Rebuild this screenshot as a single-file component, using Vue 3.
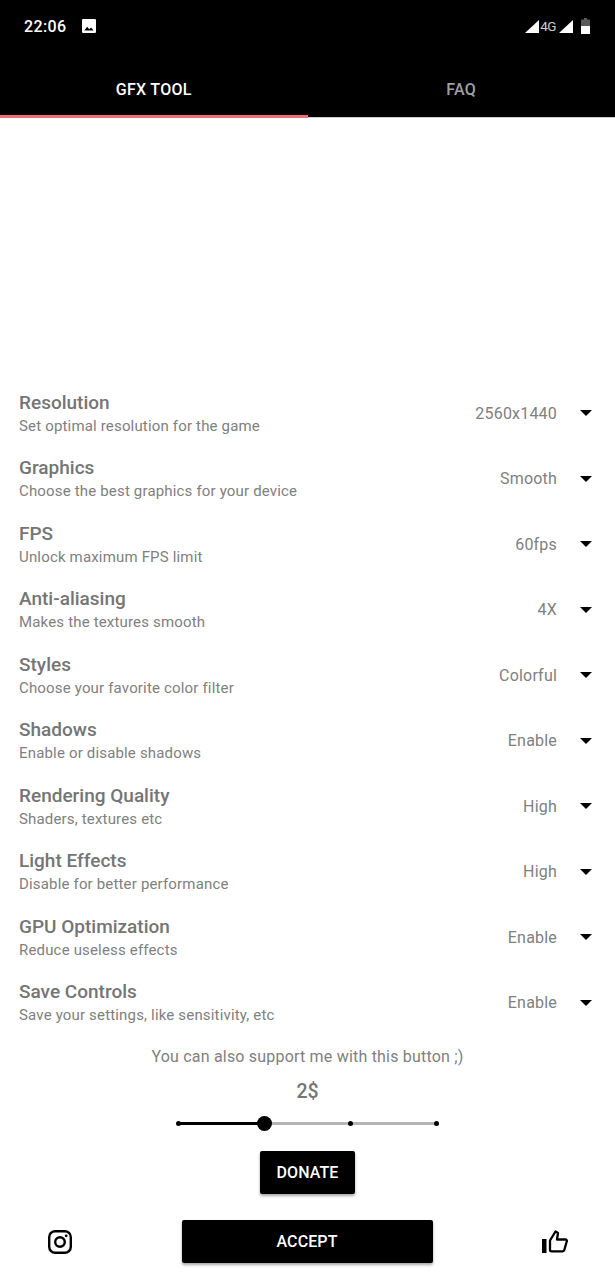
<script setup>
const rows = [
  ['Resolution', 'Set optimal resolution for the game', '2560x1440'],
  ['Graphics', 'Choose the best graphics for your device', 'Smooth'],
  ['FPS', 'Unlock maximum FPS limit', '60fps'],
  ['Anti-aliasing', 'Makes the textures smooth', '4X'],
  ['Styles', 'Choose your favorite color filter', 'Colorful'],
  ['Shadows', 'Enable or disable shadows', 'Enable'],
  ['Rendering Quality', 'Shaders, textures etc', 'High'],
  ['Light Effects', 'Disable for better performance', 'High'],
  ['GPU Optimization', 'Reduce useless effects', 'Enable'],
  ['Save Controls', 'Save your settings, like sensitivity, etc', 'Enable'],
]
</script>

<template>
  <div class="page">
    <header class="head">
      <div class="status">
        <span class="time">22:06</span>
        <svg class="pic" viewBox="0 0 12 12" width="14" height="14"><path fill="#fff" d="M1 0h10a1 1 0 0 1 1 1v10a1 1 0 0 1-1 1H1a1 1 0 0 1-1-1V1a1 1 0 0 1 1-1z"/><path fill="#000" d="M2 9.800l2.400-3.200 1.800 2.200 1.600-1.600 2.200 2.600z"/></svg>
        <span class="grow"></span>
        <svg viewBox="0 0 14 13" width="14" height="13"><path fill="#fff" d="M14 0v13H0z"/></svg>
        <span class="net">4G</span>
        <svg class="sig2" viewBox="0 0 14 13" width="14" height="13"><path fill="#fff" d="M14 0v13H0z"/></svg>
        <svg class="bat" viewBox="0 0 9 16" width="9" height="16"><path fill="#5a5a5a" d="M3 0h3v1.500h3V8H0V1.500h3z"/><path fill="#fff" d="M0 8h9v8H0z"/></svg>
      </div>
      <nav class="tabs">
        <div class="tab on">GFX TOOL</div>
        <div class="tab">FAQ</div>
      </nav>
      <div class="line"><div class="ind"></div><div class="rest"></div></div>
    </header>

    <main class="list">
      <div v-for="r in rows" :key="r[0]" class="row">
        <div class="info">
          <div class="title">{{ r[0] }}</div>
          <div class="sub">{{ r[1] }}</div>
        </div>
        <div class="val">{{ r[2] }}</div>
        <span class="caret"></span>
      </div>
    </main>

    <section class="support">
      <p class="note">You can also support me with this button ;)</p>
      <div class="amount">2$</div>
      <div class="slider">
        <div class="fill"></div>
        <i class="dot d0"></i><i class="dot d2"></i><i class="dot d3"></i>
        <i class="thumb"></i>
      </div>
      <button class="btn donate">DONATE</button>
    </section>

    <footer class="foot">
      <svg viewBox="0 0 24 24" width="24" height="24" fill="none" stroke="#000" stroke-width="2.400">
        <rect x="1.200" y="1.200" width="21.600" height="21.600" rx="6"/>
        <circle cx="12" cy="12" r="4.800"/>
        <circle cx="18.200" cy="5.800" r="1.400" fill="#000" stroke="none"/>
      </svg>
      <button class="btn accept">ACCEPT</button>
      <svg viewBox="0 0 26 23" width="26" height="23">
        <path fill="#000" d="M0 9h4.500v14H0z"/>
        <path fill="none" stroke="#000" stroke-width="2.300" stroke-linejoin="round" d="M8 10.500 13.500 1.500l2.500 1.500-1 6.500h8.500c1 0 1.600.9 1.300 1.800l-2.500 8.700c-.2.700-.8 1.300-1.600 1.300H9.500c-1 0-1.500-.6-1.500-1.500z"/>
      </svg>
    </footer>
  </div>
</template>

<style>
body { margin: 0; background: #fff; }
</style>

<style scoped>
.page {
  width: 615px;
  height: 1280px;
  display: flex;
  flex-direction: column;
  font-family: Roboto, "Liberation Sans", sans-serif;
  background: #fff;
  overflow: hidden;
}
.head { background: #000; height: 118px; display: flex; flex-direction: column; flex: none; }
.status {
  height: 52px;
  display: flex;
  align-items: center;
  padding: 0 25px 0 24px;
  color: #fff;
  flex: none;
}
.time { font-size: 16px; font-weight: 500; letter-spacing: 0.4px; }
.pic { margin-left: 15px; }
.grow { flex: 1; }
.net { font-size: 13.500px; letter-spacing: -0.500px; margin: 0 1px 0 1px; color: #ccc; }
.sig2 { margin-left: 2px; }
.bat { margin-left: 8px; }
.tabs { display: flex; flex: 1; }
.tab {
  flex: 1;
  display: flex;
  align-items: center;
  justify-content: center;
  font-size: 16px;
  font-weight: 500;
  letter-spacing: 0.3px;
  color: #a0a0a0;
  padding-top: 12px;
}
.tab.on { color: #fff; }
.line { height: 3px; display: flex; flex: none; }
.ind { width: 308px; background: #f26d73; }
.rest { flex: 1; height: 1px; align-self: flex-end; background: #ccc; }
.list { margin-top: 262.500px; flex: none; }
.row {
  height: 65.500px;
  box-sizing: border-box;
  display: flex;
  align-items: center;
  padding: 0 23px 0 19px;
}
.info { flex: 1; min-width: 0; padding-top: 2px; margin-top: -1px; }
.title { font-size: 19px; font-weight: 500; color: #757575; line-height: 24px; }
.sub { font-size: 15px; color: #808080; line-height: 22px; letter-spacing: 0.17px; }
.val { font-size: 16px; color: #808080; letter-spacing: 0.2px; }
.caret {
  margin-left: 23px;
  width: 0;
  height: 0;
  border-left: 6px solid transparent;
  border-right: 6px solid transparent;
  border-top: 6px solid #000;
}
.support { display: flex; flex-direction: column; align-items: center; flex: none; margin-top: 8.500px; }
.note { margin: 0; font-size: 16px; line-height: 22px; color: #808080; letter-spacing: 0.2px; padding-top: 2px; }
.amount { font-size: 19.500px; font-weight: 500; color: #757575; margin-top: 12px; line-height: 24px; }
.slider { position: relative; width: 258px; height: 3px; background: #b5b5b5; margin-top: 18px; }
.fill { position: absolute; left: 0; top: 0; bottom: 0; width: 86px; background: #000; }
.dot { position: absolute; top: -1px; width: 5px; height: 5px; border-radius: 50%; background: #000; margin-left: -2.500px; }
.d0 { left: 0; }
.d2 { left: 172px; }
.d3 { left: 258px; }
.thumb { position: absolute; left: 86px; top: -6px; width: 15px; height: 15px; border-radius: 50%; background: #000; margin-left: -7.500px; }
.btn {
  border: 0;
  background: #000;
  color: #fff;
  font-family: inherit;
  font-weight: 500;
  font-size: 16px;
  letter-spacing: 0.1px;
  border-radius: 2px;
  box-shadow: 0 2px 3px rgba(0, 0, 0, 0.35);
  padding: 0;
}
.donate { width: 95px; height: 43px; margin-top: 26px; }
.foot {
  flex: none;
  display: flex;
  align-items: center;
  justify-content: space-between;
  padding: 0 47px 0 48px;
  margin-top: 26px;
}
.accept { width: 251px; height: 43px; }
</style>
